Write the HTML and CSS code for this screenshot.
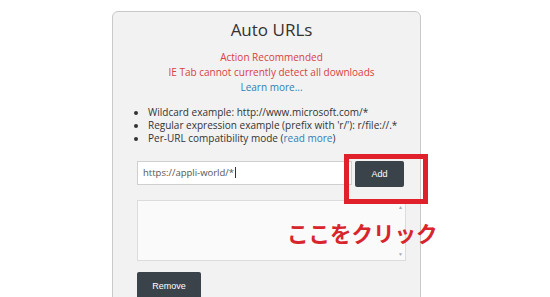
FILE: index.html
```html
<!DOCTYPE html>
<html lang="ja">
<head>
  <meta charset="UTF-8" />
  <meta name="viewport" content="width=device-width, initial-scale=1.0"/>
  <title>Auto URLs</title>
  <link rel="stylesheet" href="styles.css">
</head>
<body>
  <div class="panel">
    <h1>Auto URLs</h1>
    <div class="alert">
      <div>Action Recommended</div>
      <div>IE Tab cannot currently detect all downloads</div>
      <a href="#">Learn more...</a>
    </div>
    <ul class="tips">
      <li>Wildcard example: http://www.microsoft.com/*</li>
      <li>Regular expression example (prefix with 'r/'): r/file://.*</li>
      <li>Per-URL compatibility mode (<a href="#">read more</a>)</li>
    </ul>
    <div class="add-row">
      <div class="url-input">https://appli-world/*<span class="caret"></span></div>
      <button class="btn btn-add">Add</button>
    </div>
    <div class="url-list">
      <div class="list-body"></div>
      <div class="scroll"><span>▲</span><span>▼</span></div>
    </div>
    <button class="btn btn-remove">Remove</button>
  </div>

  <div class="mark-box"></div>
  <div class="mark-text">ここをクリック</div>
</body>
</html>
```

FILE: styles.css
```css
body { margin: 0; background: #fff; font-family: "Open Sans", "Liberation Sans", sans-serif; color: #333; height: 297px; overflow: hidden; }
a { color: #2f7fb5; text-decoration: none; }
.panel { box-sizing: border-box; width: 309px; height: 300px; margin: 11px 0 0 112px; padding: 6px 14px 0 24px; background: #f2f2f2; border: 1px solid #c9c9c9; border-radius: 6px; }
h1 { margin: 0; font-size: 17px; line-height: 24px; font-weight: normal; text-align: center; color: #333; }
.alert { margin-top: 8px; font-size: 10px; line-height: 15px; text-align: center; color: #d9413f; }
.tips { margin: 11px 0 0; padding-left: 11px; font-size: 10px; line-height: 13px; color: #333; }
.add-row { display: flex; align-items: flex-start; gap: 3px; margin-top: 16px; }
.url-input { box-sizing: border-box; width: 215px; height: 24px; padding: 0 5px; background: #fff; border: 1px solid #cfcfcf; font-size: 9.5px; line-height: 22px; color: #555; }
.caret { display: inline-block; width: 1px; height: 11px; margin-left: 1px; vertical-align: -2px; background: #333; }
.btn { box-sizing: border-box; border: none; border-radius: 2px; background: #3b434a; color: #fff; font-family: "Liberation Sans", Arial, sans-serif; font-size: 9px; cursor: pointer; padding: 0; }
.btn-add { width: 49px; height: 26px; }
.url-list { box-sizing: border-box; display: flex; width: 269px; height: 61px; margin-top: 13px; background: #fafafa; border: 1px solid #dcdcdc; }
.list-body { flex: 1; }
.scroll { display: flex; flex-direction: column; justify-content: space-between; width: 9px; padding: 3px 0; font-size: 5px; line-height: 6px; color: #aaa; text-align: center; }
.btn-remove { display: block; width: 64px; height: 28px; margin-top: 11px; }
.mark-box { position: absolute; left: 344px; top: 154px; width: 84px; height: 50px; box-sizing: border-box; border: 5px solid #e0202a; }
.mark-text { position: absolute; left: 287px; top: 218px; font-family: "Noto Sans CJK JP", sans-serif; font-weight: bold; font-size: 21.5px; line-height: 30px; color: #d8252c; }
```
